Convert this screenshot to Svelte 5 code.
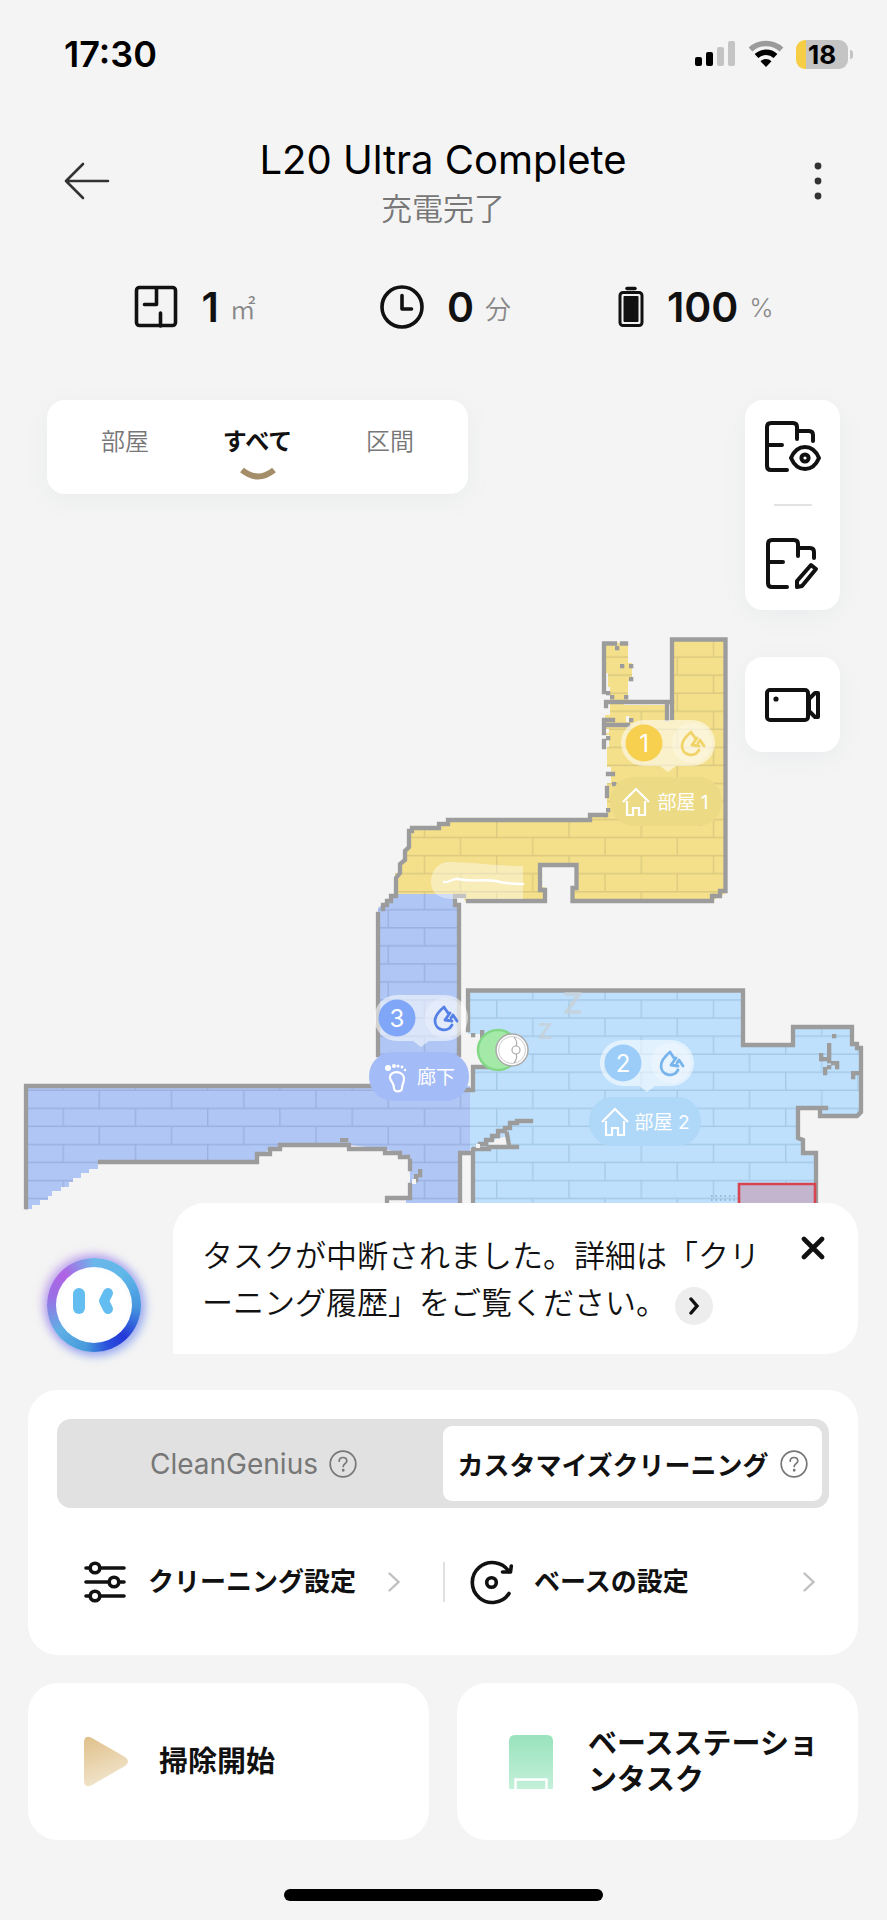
<script>
  let tab = $state("all");
  let mode = $state("custom");
  let noticeOpen = $state(true);

  const tabs = [
    { id: "room", name: "部屋" },
    { id: "all", name: "すべて" },
    { id: "zone", name: "区間" }
  ];

  const modes = [
    { id: "genius", name: "CleanGenius" },
    { id: "custom", name: "カスタマイズクリーニング" }
  ];

  const rooms = [
    { no: 1, name: "部屋 1", icon: "house", x: 668, y: 743, dot: "#f6d04e", tag: "#ecda84", drop: "#f1d468" },
    { no: 2, name: "部屋 2", icon: "house", x: 647, y: 1063, dot: "#9ccdf9", tag: "#aed7f8", drop: "#78b4ec" },
    { no: 3, name: "廊下", icon: "foot", x: 421, y: 1018, dot: "#80a7f7", tag: "#a3bbf6", drop: "#5580e6" }
  ];

  const floors = [
    { id: "yellow", fill: "#f4e08b", line: "#dac97f" },
    { id: "blue", fill: "#b0c6f4", line: "#9bb0de" },
    { id: "sky", fill: "#bee0fc", line: "#a4c9e6" }
  ];

  // single wall cells left over by the scan
  const specks = [
    [615, 646], [620, 664], [629, 664], [629, 677], [624, 695], [610, 695], [606, 691],
    [629, 718], [606, 736], [606, 808], [612, 782],
    [471, 1033], [480, 1030], [480, 1034], [832, 1034],
    [418, 1169], [418, 1173], [414, 1174], [414, 1178], [340, 1138], [344, 1138],
    [827, 1043], [827, 1047], [827, 1051], [827, 1055], [827, 1059], [823, 1057],
    [819, 1053], [819, 1057], [831, 1061], [835, 1061], [835, 1065], [827, 1065],
    [823, 1067], [823, 1071], [851, 1071], [855, 1071], [851, 1075]
  ];
</script>

{#snippet help()}
  <svg class="help" viewBox="0 0 28 28" fill="none" stroke="currentColor" stroke-width="1.7" stroke-linecap="round">
    <circle cx="14" cy="14" r="12.8" />
    <path d="M10.2 11.2c0-2.3 1.6-3.7 3.8-3.7s3.8 1.4 3.8 3.4c0 2.6-3.6 2.9-3.6 5.6" />
    <circle cx="14.2" cy="20.3" r=".6" fill="currentColor" />
  </svg>
{/snippet}

{#snippet chevron()}
  <svg class="chevron" viewBox="0 0 12 20" fill="none" stroke="#c0c0c0" stroke-width="2.4" stroke-linecap="round">
    <path d="M1.5 1.5 10.5 10l-9 8.5" />
  </svg>
{/snippet}

<div class="app" lang="ja">
  <div class="status">
    <span class="time">17:30</span>
    <div class="status-icons">
      <svg width="42" height="28" viewBox="0 0 42 28">
        <rect x="1" y="17" width="7" height="9" rx="2" />
        <rect x="12" y="12" width="7" height="14" rx="2" />
        <rect x="23" y="7" width="7" height="19" rx="2" fill="#c4c4c4" />
        <rect x="34" y="1" width="7" height="25" rx="2" fill="#c4c4c4" />
      </svg>
      <svg width="36" height="28" viewBox="0 0 36 28">
        <path d="M2.5 9.5a23 23 0 0 1 31 0" fill="none" stroke="#9b9b9b" stroke-width="5.5" />
        <path d="M8.5 16a14 14 0 0 1 19 0" fill="none" stroke="#000" stroke-width="5.5" />
        <path d="M18 27l-5.5-5.700a8 8 0 0 1 11 0z" />
      </svg>
      <span class="battery"><b>18</b></span>
    </div>
  </div>

  <header>
    <button class="plain" aria-label="戻る">
      <svg width="46" height="38" viewBox="0 0 46 38" fill="none" stroke="#333" stroke-width="2.6" stroke-linecap="round" stroke-linejoin="round">
        <path d="M19 2 2 19l17 17M2 19h42" />
      </svg>
    </button>
    <div class="title">
      <h1>L20 Ultra Complete</h1>
      <p>充電完了</p>
    </div>
    <button class="plain" aria-label="メニュー">
      <svg width="8" height="38" viewBox="0 0 8 38" fill="#333">
        <circle cx="4" cy="4" r="3.4" />
        <circle cx="4" cy="19" r="3.4" />
        <circle cx="4" cy="34" r="3.4" />
      </svg>
    </button>
  </header>

  <div class="stats">
    <div class="stat">
      <svg width="44" height="44" viewBox="0 0 44 44" fill="none" stroke="#111" stroke-width="3.6" stroke-linecap="round" stroke-linejoin="round">
        <rect x="2.5" y="2.5" width="39" height="38" rx="3" />
        <path d="M22.5 3v16.5H10.5M26.5 41V28" />
      </svg>
      <strong>1</strong><span>㎡</span>
    </div>
    <div class="stat">
      <svg width="44" height="44" viewBox="0 0 44 44" fill="none" stroke="#111" stroke-width="3.6" stroke-linecap="round" stroke-linejoin="round">
        <circle cx="22" cy="22" r="20" />
        <path d="M22 10.5V24h9.5" />
      </svg>
      <strong>0</strong><span>分</span>
    </div>
    <div class="stat">
      <svg width="26" height="44" viewBox="0 0 26 44" fill="none" stroke="#111">
        <path d="M9 3.5h8" stroke-width="3.5" stroke-linecap="round" />
        <rect x="2" y="7.5" width="22" height="33" rx="3" stroke-width="3" />
        <rect x="5.5" y="11" width="15" height="26" rx="1" fill="#111" stroke="none" />
      </svg>
      <strong>100</strong><span>%</span>
    </div>
  </div>

  <main class="stage">
    <svg class="map" viewBox="0 380 887 830" role="img" aria-label="マップ">
      <defs>
        {#each floors as f}
          <pattern id={f.id} x="496" y="999.3" width="72.25" height="36.1" patternUnits="userSpaceOnUse">
            <rect width="73" height="37" fill={f.fill} />
            <path d="M0 .7H73M0 18.75H73M.7 0V18M36.8 18V37" stroke={f.line} stroke-width="1.3" fill="none" />
          </pattern>
        {/each}
      </defs>

      <!-- floors -->
      <path fill="url(#yellow)" d="M604 643h24v20h4v18h-4v20h-4v4h45v15h3V640h54v253l-14 8H572v-14h4v-22h-36v22h5v14h-80l-3-7H395V873h5v-11h5v-12h4v-19h4v-3h24v-4h12v-4h142v-5h16v-32h4v-16h-4v-20h2v-12h-4v-20h5v-28h-2v-14h-2z" />
      <path fill="url(#blue)" d="M395 894h58v12h6v180h11v67h-10v57h-54v-11h4v-24l-2-18-9-4-14-4-36-4h-67l-12 5-12 5-4 8H98v6h-9v4h-8v5h-8v4h-4v5h-8v4h-9v5h-4v4h-8v5h-8v4h-5v5H26V1086h352V908z" />
      <path fill="url(#sky)" d="M468 991h275v54h50v-18h59v19h9v70h-41v-8h-22v31h5v14h13v57H473v-61h-3v-61h3v-23h20v-31h-25z" />
      <path fill="#f4f4f4" d="M489 1143l7-4 12-3v6h3v5h-23z" />

      <!-- walls -->
      <g fill="none" stroke="#9c9c9c" stroke-width="4.3" stroke-linecap="square">
        <path d="M672 718V639.5h53.5V891H720v5h-8v5H572.5v-13h4v-23H540v25h5v11h-77M464 896h-9v9h4v150" />
        <path d="M378 1055V914M383 909v-4h4v-4h4v-5h5v-18l4-5v-9l5-4v-9l4-4v-16h3v-3h27v-4h9v-4h142v-5h16" />
        <path d="M604 692V643.5h11M622 643.5h4M606 706v-4h66M667 702v17M604 733v-13h9M608 725h20M604 741v6M608 774h5M607 788v8" />
        <path d="M26 1207V1086h350M100 1162h157v-8h13v-5h10v-4h69v4h36v4h15v4h8M410 1161v8M410 1185v13h-23v4M460 1203v-50h11M473 1203v-53M465 1090h8v-23h16" />
        <path d="M468 1030v-39.5h275V1045h50v-18h59v17h5v4h4v64l-4 4h-37v-8h6M818 1108h-20v30l5 2v13h13v50" />
        <path d="M474 1149h15v-2h28M480 1144h6v-4h6v-4h6v-5h7v-3h5v-5h7v-2h14M507 1134l2 11" />
      </g>
      {#each specks as [x, y]}
        <rect {x} {y} width="4.3" height="4.3" fill="#9c9c9c" />
      {/each}
      <path fill="#f4f4f4" d="M606 729h3v4h-3zM626 716h3v6h-3zM412 1179h4v5h-4zM476 1144h4v4h-4z" />

      <path d="M683 825h18" stroke="#8f8b7a" />
      <path d="M739 1215v-31h76v31" fill="#c4b5cf" stroke="#d64550" stroke-width="2.6" />
      <path d="M711 1196h27M711 1200h27" stroke="#8cadc8" stroke-width="1.5" stroke-dasharray="1.5 3" />
      <path fill="#fff" opacity=".4" d="M523 866c-30 0-50-4-74-4-10 0-18 8-18 20s10 17 22 17h70z" />
      <path d="M444 882c5 1 9-4 14-3 12 3 26 0 38 2 10 3 18 3 27 3" fill="none" stroke="#fff" stroke-width="2.4" stroke-linecap="round" />

      <!-- dock and robot -->
      <circle cx="498" cy="1050" r="20" fill="#a5e9a8" stroke="#82d886" stroke-width="2.5" />
      <circle cx="512" cy="1050" r="16" fill="#fff" stroke="#aaa" stroke-width="1.5" />
      <circle cx="512" cy="1050" r="13.5" fill="none" stroke="#ccc" />
      <circle cx="516" cy="1050" r="4" fill="#fff" stroke="#aaa" stroke-width="1.2" />
      <path d="M514 1037q4 5 2 9M514 1063q4-5 2-9" fill="none" stroke="#aaa" stroke-width="1.2" />
      <text class="snore" x="545" y="1031" font-size="22">Z</text>
      <text class="snore" x="573" y="1003" font-size="30">Z</text>

      {#each rooms as r}
        <g transform="translate({r.x} {r.y})">
          <rect x="-47" y="-23" width="94" height="46" rx="23" fill="#fff" opacity=".55" />
          <path d="M-8 23h16l-8 6z" fill="#fff" opacity=".55" />
          <circle cx="24" r="20" fill="#fff" opacity=".25" />
          <circle cx="-24" r="18.5" fill={r.dot} />
          <text x="-24" font-size="24">{r.no}</text>
          <g fill="none" stroke={r.drop} stroke-width="2.8" stroke-linecap="round" stroke-linejoin="round">
            <path d="M27-5c-1-2-3-4-4-6-6 5-9 9-9 14a9 9 0 0 0 17 4" />
            <path d="M29-5 24 2l7 1M30 0l2-3 4 6" />
          </g>
          <rect x="-58" y="34" width="112" height="49" rx="24" fill={r.tag} class:narrow={r.icon === "foot"} />
          {#if r.icon === "house"}
            <path d="M-45 59l13-13 13 13M-41 58v14h6v-7h6v7h6V58" fill="none" stroke="#fff" stroke-width="2.2" />
            <text x="15" y="59" font-size="19">{r.name}</text>
          {:else}
            <g fill="#fff">
              <circle cx="-33" cy="50" r="3" />
              <circle cx="-27" cy="48" r="2" />
              <circle cx="-23" cy="48" r="1.6" />
              <circle cx="-19" cy="49" r="1.4" />
              <circle cx="-16" cy="52" r="1.2" />
            </g>
            <path d="M-31 60c-1-8 14-8 14 1 0 4-2 5-2 9s-8 5-8 0c0-5-3-6-4-10z" fill="none" stroke="#fff" stroke-width="2.2" />
            <text x="15" y="59" font-size="19">{r.name}</text>
          {/if}
        </g>
      {/each}
    </svg>

    <div class="overlay">
      <nav class="tabs">
        {#each tabs as t}
          <button class:active={tab === t.id} onclick={() => (tab = t.id)}>
            {t.name}
            <svg width="38" height="14" viewBox="0 0 38 14"><path d="M3 3q16 13 32 0" fill="none" stroke="#a48e6a" stroke-width="6" /></svg>
          </button>
        {/each}
      </nav>
      <div class="tools">
        <div class="tool-card">
          <button aria-label="マップ表示">
            <svg width="58" height="54" viewBox="0 0 58 54" fill="none" stroke="#111" stroke-width="4" stroke-linecap="round" stroke-linejoin="round">
              <path d="M23 49H7q-4 0-4-4V6q0-4 4-4h22q4 0 4 4v12M33 10h12q4 0 4 4v6M3 24h15" />
              <path d="M27 37c3-7 8-11 14-11s11 4 14 11c-3 7-8 11-14 11s-11-4-14-11z" />
              <circle cx="41" cy="37" r="3.6" />
            </svg>
          </button>
          <hr />
          <button aria-label="マップ編集">
            <svg width="58" height="54" viewBox="0 0 58 54" fill="none" stroke="#111" stroke-width="4" stroke-linecap="round" stroke-linejoin="round">
              <path d="M23 51H8q-4 0-4-4V8q0-4 4-4h22q4 0 4 4v12M34 12h12q4 0 4 4v6M4 26h15" />
              <path d="M33 51v-6l14-16 5 4-14 17z" />
            </svg>
          </button>
        </div>
        <div class="tool-card">
          <button aria-label="カメラ">
            <svg width="58" height="54" viewBox="0 0 58 54" fill="none" stroke="#111" stroke-width="4" stroke-linecap="round" stroke-linejoin="round">
              <rect x="3" y="12" width="41" height="30" rx="3" />
              <path d="M45 21l6-6h3v24h-3l-6-6z" />
              <circle cx="12" cy="21" r="2.6" fill="#111" stroke="none" />
            </svg>
          </button>
        </div>
      </div>
    </div>
  </main>

  {#if noticeOpen}
    <section class="notice">
      <div class="avatar">
        <svg width="50" height="30" viewBox="0 0 50 30" fill="none" stroke="#63bdf0" stroke-linecap="round" stroke-linejoin="round">
          <path d="M10 8v14" stroke-width="12" />
          <path d="M39 7l-4 8 4 8" stroke-width="10" />
        </svg>
      </div>
      <div class="bubble">
        <p>
          タスクが中断されました。詳細は「クリーニング履歴」をご覧ください。<button class="more" aria-label="詳細"><svg width="14" height="18" viewBox="0 0 14 18" fill="none" stroke="#111" stroke-width="3.4" stroke-linecap="round"><path d="M4 2l6 7-6 7" /></svg></button>
        </p>
        <button class="close" aria-label="閉じる" onclick={() => (noticeOpen = false)}>
          <svg width="24" height="24" viewBox="0 0 24 24" stroke="#111" stroke-width="4.6" stroke-linecap="round"><path d="M3 3l18 18M21 3 3 21" /></svg>
        </button>
      </div>
    </section>
  {/if}

  <section class="panel">
    <div class="modes">
      {#each modes as m}
        <button class:active={mode === m.id} onclick={() => (mode = m.id)}>
          <span>{m.name}</span>
          {@render help()}
        </button>
      {/each}
    </div>
    <div class="settings">
      <button>
        <svg width="44" height="46" viewBox="0 0 44 46" fill="#fff" stroke="#111" stroke-width="3.6" stroke-linecap="round">
          <path d="M3 9h38M3 23h38M3 37h38" />
          <circle cx="12" cy="9" r="4.8" />
          <circle cx="31" cy="23" r="4.8" />
          <circle cx="12" cy="37" r="4.8" />
        </svg>
        <span>クリーニング設定</span>
        {@render chevron()}
      </button>
      <button>
        <svg width="44" height="46" viewBox="0 0 44 46" fill="none" stroke="#111" stroke-width="3.6" stroke-linecap="round" stroke-linejoin="round">
          <path d="M40 34.5a20 20 0 1 1 0-22" />
          <path d="M33.5 13h8l.8-6" />
          <circle cx="22.5" cy="23.5" r="4.8" />
        </svg>
        <span>ベースの設定</span>
        {@render chevron()}
      </button>
    </div>
  </section>

  <section class="actions">
    <button class="start">
      <svg width="46" height="54" viewBox="0 0 46 54">
        <defs>
          <linearGradient id="gold" x1="0" y1="0" x2=".3" y2="1"><stop stop-color="#dfc08a" /><stop offset="1" stop-color="#f1e4cb" /></linearGradient>
        </defs>
        <path d="M1 8q0-9 8-5l33 19q6 4 0 9L9 50q-8 4-8-5z" fill="url(#gold)" />
      </svg>
      <span>掃除開始</span>
    </button>
    <button class="base">
      <svg width="46" height="56" viewBox="0 0 46 56">
        <defs>
          <linearGradient id="mint" x1="0" y1="0" x2="0" y2="1"><stop stop-color="#99e3bd" /><stop offset="1" stop-color="#c3f0d9" /></linearGradient>
        </defs>
        <path d="M1 54V7q0-6 6-6h32q6 0 6 6v47q0 1-1 1H2q-1 0-1-1z" fill="url(#mint)" />
        <path d="M7.5 56V45.5h31V56" fill="none" stroke="#fff" stroke-width="2.4" />
      </svg>
      <span>ベースステーションタスク</span>
    </button>
  </section>

  <div class="home"></div>
</div>

<style>
  :global(body) {
    margin: 0;
    background: #f4f4f4;
  }
  .app {
    font-family: Inter, "Noto Sans CJK JP", sans-serif;
    color: #111;
    background: #f4f4f4;
  }
  button {
    font: inherit;
    color: inherit;
    border: 0;
    padding: 0;
    background: none;
    cursor: pointer;
  }
  svg {
    display: block;
    flex: none;
  }
  p,
  h1 {
    margin: 0;
    font-weight: 400;
  }
  .status {
    display: flex;
    align-items: center;
    justify-content: space-between;
    height: 108px;
    padding: 0 34px 0 64px;
  }
  .time {
    font-size: 36px;
    font-weight: 600;
    color: #000;
  }
  .status-icons {
    display: flex;
    align-items: center;
    gap: 12px;
  }
  .battery {
    position: relative;
    width: 52px;
    height: 29px;
    margin-right: 5px;
    border-radius: 9px;
    background: linear-gradient(90deg, #f6ce46 20%, #c4c4c4 20%);
    font-size: 26px;
    line-height: 29px;
    text-align: center;
  }
  .battery b {
    font-weight: 700;
    color: #000;
  }
  .battery::after {
    content: "";
    position: absolute;
    right: -5px;
    top: 10px;
    width: 3px;
    height: 9px;
    border-radius: 0 3px 3px 0;
    background: #c4c4c4;
  }
  header {
    display: flex;
    align-items: center;
    justify-content: space-between;
    height: 146px;
    padding: 0 65px 0 64px;
  }
  .plain {
    display: flex;
    width: 46px;
  }
  .plain:last-child {
    justify-content: flex-end;
  }
  .title {
    padding-top: 6px;
    text-align: center;
  }
  h1 {
    font-size: 40px;
    line-height: 50px;
    color: #000;
  }
  .title p {
    font-size: 31px;
    line-height: 48px;
    font-weight: 350;
    color: #777;
  }
  .stats {
    display: grid;
    grid-template-columns: repeat(3, 1fr);
    height: 106px;
    margin-bottom: 20px;
    padding: 0 66px 0 70px;
  }
  .stat {
    display: flex;
    align-items: center;
    justify-content: center;
  }
  .stat strong {
    margin: 0 11px 0 23px;
    font-size: 41px;
    font-weight: 600;
  }
  .stat span {
    font-size: 26px;
    font-weight: 350;
    color: #888;
  }
  .stage {
    display: grid;
  }
  .stage > * {
    grid-area: 1 / 1;
  }
  .map {
    width: 100%;
    height: auto;
  }
  .map text {
    fill: #fff;
    text-anchor: middle;
    dominant-baseline: central;
  }
  .map text.snore {
    fill: #c8cfd4;
    font-weight: 700;
    opacity: 0.7;
  }
  .narrow {
    width: 100px;
    x: -52px;
  }
  .overlay {
    display: flex;
    align-items: flex-start;
    justify-content: space-between;
    padding: 20px 47px;
  }
  .tabs,
  .tool-card {
    background: #fff;
    border-radius: 18px;
    box-shadow: 0 6px 24px rgba(120, 140, 160, 0.07);
  }
  .tabs {
    display: flex;
    justify-content: space-between;
    width: 321px;
    padding: 23px 50px 13px;
  }
  .tabs button {
    display: flex;
    flex-direction: column;
    align-items: center;
    gap: 6px;
    min-width: 56px;
    font-size: 24px;
    line-height: 38px;
    font-weight: 350;
    color: #777;
  }
  .tabs button.active {
    font-weight: 700;
    color: #111;
  }
  .tabs svg {
    visibility: hidden;
  }
  .tabs .active svg {
    visibility: visible;
  }
  .tools {
    display: grid;
    gap: 47px;
  }
  .tool-card button {
    display: flex;
    align-items: center;
    justify-content: center;
    width: 95px;
    height: 95px;
  }
  hr {
    width: 38px;
    height: 2px;
    margin: 9px auto;
    border: 0;
    background: #e2e2e2;
  }
  .notice {
    position: relative;
    display: flex;
    gap: 32px;
    margin: -7px 29px 36px 47px;
  }
  .avatar {
    display: flex;
    align-items: center;
    justify-content: center;
    box-sizing: border-box;
    flex: none;
    align-self: flex-end;
    width: 94px;
    height: 94px;
    margin-bottom: 2px;
    padding-bottom: 8px;
    border: 9px solid transparent;
    border-radius: 50%;
    background:
      radial-gradient(#fff 60%, #eef1ff) padding-box,
      conic-gradient(#6cb6ea, #60b8e8 12%, #4595df 26%, #2338d8 38%, #2b50dc 45%, #479bdc 53%, #5fb0e4 65%, #9a6fe6 78%, #b063e4 88%, #6cb6ea) border-box;
    box-shadow:
      -3px -3px 10px 1px rgba(190, 130, 235, 0.5),
      2px 2px 10px 2px rgba(90, 130, 240, 0.6);
  }
  .bubble {
    display: flex;
    flex: 1;
    align-items: flex-start;
    justify-content: space-between;
    padding: 29px 26px 28px 29px;
    border-radius: 32px 32px 32px 0;
    background: #fff;
  }
  .bubble p {
    max-width: 575px;
    font-size: 31px;
    line-height: 47px;
    font-weight: 350;
    line-break: anywhere;
  }
  .more {
    display: inline-flex;
    align-items: center;
    justify-content: center;
    width: 38px;
    height: 38px;
    margin-left: 8px;
    border-radius: 50%;
    background: #ededed;
    vertical-align: middle;
  }
  .close {
    padding: 4px 7px;
  }
  .panel {
    margin: 0 29px 28px 28px;
    padding: 29px 29px 22px;
    border-radius: 30px;
    background: #fff;
  }
  .modes {
    display: grid;
    grid-template-columns: 1fr 1fr;
    padding: 7px;
    border-radius: 14px;
    background: #e1e1e1;
  }
  .modes button {
    display: flex;
    align-items: center;
    justify-content: center;
    gap: 11px;
    height: 75px;
    border-radius: 9px;
    font-size: 28px;
    white-space: nowrap;
    color: #777;
  }
  .modes .active {
    background: #fff;
  }
  .modes .active span {
    font-size: 26px;
    font-weight: 700;
    color: #111;
  }
  .help {
    width: 28px;
    height: 28px;
    color: #777;
  }
  .settings {
    display: grid;
    grid-template-columns: 1fr 1fr;
    padding: 51px 0 28px;
  }
  .settings button {
    display: flex;
    align-items: center;
    gap: 21px;
    padding: 0 43px 0 26px;
    font-size: 26px;
    line-height: 46px;
    font-weight: 700;
    white-space: nowrap;
  }
  .settings button + button {
    padding-right: 14px;
    padding-left: 24px;
    border-left: 2px solid #e0e0e0;
    border-image: linear-gradient(transparent 8%, #e0e0e0 8% 92%, transparent 92%) 1;
  }
  .chevron {
    width: 12px;
    height: 20px;
    margin-left: auto;
  }
  .actions {
    display: grid;
    grid-template-columns: 1fr 1fr;
    gap: 28px;
    margin: 0 29px 0 28px;
  }
  .actions button {
    display: flex;
    align-items: center;
    gap: 30px;
    height: 157px;
    border-radius: 30px;
    background: #fff;
    font-size: 29px;
    line-height: 36px;
    font-weight: 700;
    text-align: left;
    line-break: anywhere;
  }
  .actions .start {
    padding: 0 55px;
  }
  .actions .base {
    gap: 34px;
    padding: 0 28px 0 51px;
  }
  .home {
    width: 36%;
    height: 12px;
    margin: 49px auto 19px;
    border-radius: 6px;
    background: #000;
  }
</style>
